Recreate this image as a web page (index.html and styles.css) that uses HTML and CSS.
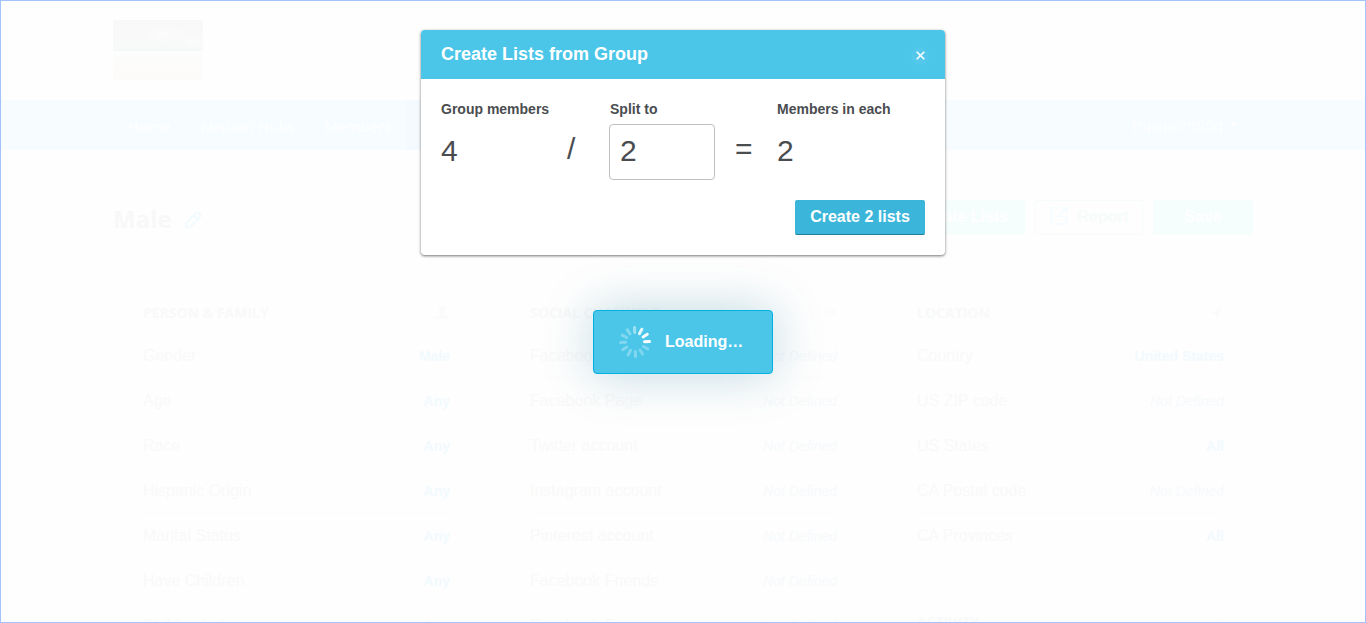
FILE: index.html
```html
<!DOCTYPE html>
<html lang="en">
<head>
<meta charset="utf-8">
<title>Create Lists from Group</title>
<link rel="stylesheet" href="styles.css">
</head>
<body>
<div class="page">
  <header class="brand"><div class="photo"></div></header>
  <nav class="nav">
    <div class="nav-links"><span>Home</span><span>Mission Hubs</span><span>Members</span><span class="active">Groups</span></div>
    <div class="user">tripsprint95q <i class="caret"></i></div>
  </nav>
  <main class="content">
    <div class="title-row">
      <h1>Male</h1>
      <svg class="pencil" width="18" height="18" viewBox="0 0 18 18"><path d="M2 16v-4L11.500 2.500a2.400 2.400 0 0 1 4 4L6 16zM10 4.500l3.500 3.500" fill="none" stroke="#f1fbfe" stroke-width="2" stroke-linejoin="round"/></svg>
      <div class="actions">
        <div class="btn create">Create Lists</div>
        <div class="btn report"><svg width="20" height="20" viewBox="0 0 20 20"><path d="M8 2H4.500A2.500 2.500 0 0 0 2 4.500v11A2.500 2.500 0 0 0 4.500 18h10a2.500 2.500 0 0 0 2.500-2.500V11M8.500 11.500L17 3M12 2h6v6" fill="none" stroke="#f6fcff" stroke-width="2"/></svg>Report</div>
        <div class="btn save">Save</div>
      </div>
    </div>
    <div class="columns">
      <section>
        <h2>PERSON &amp; FAMILY <svg width="14" height="14" viewBox="0 0 14 14"><path d="M7 0a3.500 4 0 0 1 2 7.200V9l5 2v2H0v-2l5-2V7.200A3.500 4 0 0 1 7 0z" fill="#fbfbfb"/></svg></h2>
        <div class="row line"><span>Gender</span><b>Male</b></div>
        <div class="row"><span>Age</span><b>Any</b></div>
        <div class="row"><span>Race</span><b>Any</b></div>
        <div class="row line"><span>Hispanic Origin</span><b>Any</b></div>
        <div class="row"><span>Marital Status</span><b>Any</b></div>
        <div class="row"><span>Have Children</span><b>Any</b></div>
        <div class="row"><span>Children's Age</span><b>Any</b></div>
      </section>
      <section>
        <h2>SOCIAL CHANNELS <svg width="14" height="14" viewBox="0 0 14 14"><path d="M2 3h11v7H6l-3 2v-2H2z" fill="#fcfcfc"/></svg></h2>
        <div class="row line"><span>Facebook ID</span><em>Not Defined</em></div>
        <div class="row"><span>Facebook Page</span><em>Not Defined</em></div>
        <div class="row"><span>Twitter account</span><em>Not Defined</em></div>
        <div class="row line"><span>Instagram account</span><em>Not Defined</em></div>
        <div class="row"><span>Pinterest account</span><em>Not Defined</em></div>
        <div class="row"><span>Facebook Friends</span><em>Not Defined</em></div>
        <div class="row"><span>Facebook Fans</span><em>Not Defined</em></div>
      </section>
      <section>
        <h2>LOCATION <svg width="14" height="14" viewBox="0 0 14 14"><path d="M13 1L8 13 7 8 1 7z" fill="#fbfbfb"/></svg></h2>
        <div class="row line"><span>Country</span><b>United States</b></div>
        <div class="row"><span>US ZIP code</span><em>Not Defined</em></div>
        <div class="row"><span>US States</span><b>All</b></div>
        <div class="row line"><span>CA Postal code</span><em>Not Defined</em></div>
        <div class="row"><span>CA Provinces</span><b>All</b></div>
        <h2 class="second">ACTIVITY <svg width="14" height="14" viewBox="0 0 14 14"><path d="M10 1l3 12H6z" fill="#fcfcfc"/></svg></h2>
      </section>
    </div>
  </main>
</div>

<div class="modal">
  <div class="modal-head"><span>Create Lists from Group</span>
    <div class="close"><svg width="9" height="9" viewBox="0 0 9 9"><path d="M.7.700l7.600 7.600M8.300.7L.7 8.300" stroke="#fff" stroke-width="1.600"/></svg></div>
  </div>
  <div class="modal-body">
    <div class="split">
      <div class="field members"><label>Group members</label><div class="num">4</div></div>
      <div class="op slash">/</div>
      <div class="field parts"><label>Split to</label><div class="input">2</div></div>
      <div class="op equals">=</div>
      <div class="field"><label>Members in each</label><div class="num">2</div></div>
    </div>
    <div class="submit">Create 2 lists</div>
  </div>
</div>

<div class="loading">
  <svg width="34" height="34" viewBox="-17 -17 34 34" stroke="#fff" stroke-width="3" stroke-linecap="round">
    <g transform="rotate(-2)">
      <path d="M0-9.500V-14.500" opacity=".46"/>
      <path d="M0-9.500V-14.500" opacity=".85" transform="rotate(30)"/>
      <path d="M0-9.500V-14.500" opacity=".95" transform="rotate(60)"/>
      <path d="M0-9.500V-14.500" transform="rotate(90)"/>
      <path d="M0-9.500V-14.500" opacity=".28" transform="rotate(120)"/>
      <path d="M0-9.500V-14.500" opacity=".28" transform="rotate(150)"/>
      <path d="M0-9.500V-14.500" opacity=".3" transform="rotate(180)"/>
      <path d="M0-9.500V-14.500" opacity=".3" transform="rotate(210)"/>
      <path d="M0-9.500V-14.500" opacity=".3" transform="rotate(240)"/>
      <path d="M0-9.500V-14.500" opacity=".3" transform="rotate(270)"/>
      <path d="M0-9.500V-14.500" opacity=".3" transform="rotate(300)"/>
      <path d="M0-9.500V-14.500" opacity=".32" transform="rotate(330)"/>
    </g>
  </svg>
  <span>Loading…</span>
</div>
<div class="frame"></div>
</body>
</html>
```
FILE: styles.css
```css
* { box-sizing: border-box; }
body {
  margin: 0;
  width: 1366px;
  height: 623px;
  position: relative;
  overflow: hidden;
  background: #fefefe;
  font-family: "Liberation Sans", Arial, sans-serif;
  color: #4a4d50;
}
.page { height: 623px; overflow: hidden; }
.frame {
  position: absolute;
  inset: 0;
  border: 1px solid #a2c4fa;
  pointer-events: none;
}
.brand { height: 100px; padding: 20px 113px; }
.photo {
  width: 90px;
  height: 60px;
  background:
    radial-gradient(ellipse 22px 9px at 52px 14px, rgba(254,254,254,.6), transparent),
    radial-gradient(ellipse 16px 6px at 80px 22px, rgba(254,254,254,.5), transparent),
    linear-gradient(#f8f8f8 0, #f9f9f9 30%, #f7f9f9 51%, #fefefe 54%, #fcfcfb 60%, #fdfbf9 100%);
}
.nav {
  height: 50px;
  padding: 0 113px;
  display: flex;
  justify-content: space-between;
  background: #f6fcff;
  color: #fff;
  font: 500 15px/53px "Open Sans", sans-serif;
}
.nav-links { display: flex; }
.nav-links span { padding: 0 15px; height: 50px; }
.nav-links .active { background: #f4fafd; }
.user { padding-right: 15px; display: flex; align-items: center; gap: 7px; }
.caret { border: 4px solid transparent; border-top-color: #fff; border-bottom: 0; }
.content { padding: 50px 113px 0; }
.title-row { display: flex; align-items: center; height: 35px; }
h1 { margin: 2px 0 0; font: bold 24px/34px "Open Sans", sans-serif; color: #f8f8f8; }
.pencil { margin-left: 12px; margin-top: 4px; }
.actions { margin-left: auto; display: flex; gap: 10px; }
.btn {
  height: 35px;
  border-radius: 2px;
  font: bold 16px/33px "Liberation Sans", sans-serif;
  text-align: center;
  color: #fff;
  background: #f6fdfd;
}
.create { width: 125px; }
.report {
  width: 108px;
  display: flex;
  justify-content: center;
  gap: 8px;
  border: 1px solid #f6fcfc;
  background: #fefefe;
  color: #f6fbfb;
  line-height: 32px;
}
.report svg { margin-top: 5px; }
.save { width: 100px; }
.columns { padding: 68px 30px 0; display: flex; gap: 81px; }
section { width: 306px; }
h2 {
  display: flex;
  justify-content: space-between;
  align-items: center;
  margin: 0 0 10px;
  height: 20px;
  font: bold 14px/20px "Open Sans", sans-serif;
  color: #f8f9f9;
}
.second { margin-top: 54px; }
.row {
  display: flex;
  justify-content: space-between;
  align-items: center;
  height: 45px;
  font-size: 16px;
  color: #f9f9f9;
}
.line { box-shadow: inset 0 -1px #fcfcfc; }
.row b, .row em { font-size: 14px; margin-right: -1px; padding-top: 1px; }
.row b { color: #f2fafe; }
.row em { color: #f7fafc; }

.modal {
  position: absolute;
  left: 421px;
  top: 30px;
  width: 524px;
  height: 225px;
  background: #fff;
  border-radius: 4px;
  box-shadow: 0 1px 3px rgba(0,0,0,.55);
}
.modal-head {
  height: 49px;
  padding: 0 16px 0 20px;
  display: flex;
  align-items: center;
  justify-content: space-between;
  background: #4bc6e9;
  border-radius: 4px 4px 0 0;
  color: #fff;
  font: bold 18px/46px "Liberation Sans", sans-serif;
}
.modal-head span { margin-bottom: 2px; }
.close {
  width: 18px;
  height: 18px;
  margin-top: 2px;
  display: flex;
  align-items: center;
  justify-content: center;
  border-radius: 50%;
  background: #53c8ea;
}
.modal-body { padding: 20px; display: flex; flex-direction: column; align-items: flex-end; gap: 20px; }
.split { display: flex; width: 100%; height: 81px; }
.field label { display: block; font: bold 14px/20px "Liberation Sans", sans-serif; white-space: nowrap; }
.field.members { width: 126px; }
.num, .input { font-size: 30px; line-height: 54px; }
.num { padding-top: 5px; }
.input {
  width: 106px;
  height: 56px;
  margin-top: 5px;
  padding-left: 10px;
  border: 1px solid #bfbfbf;
  border-radius: 4px;
  line-height: 52px;
}
.field.parts { width: 126px; }
.parts label { padding-left: 1px; }
.op { padding-top: 23px; font-size: 30px; line-height: 54px; }
.slash { width: 42px; }
.equals { width: 42px; }
.submit {
  width: 130px;
  height: 35px;
  border-radius: 2px;
  background: #3bb6da;
  border-bottom: 1px solid #1f7f9b;
  color: #fff;
  font: bold 16px/33px "Liberation Sans", sans-serif;
  text-align: center;
}
.loading {
  position: absolute;
  left: 593px;
  top: 310px;
  width: 180px;
  height: 64px;
  padding-left: 24px;
  display: flex;
  align-items: center;
  gap: 13px;
  background: #4bc6e9;
  border: 1px solid #00b0e0;
  border-radius: 4px;
  box-shadow: 0 0 50px rgba(0,110,140,.26);
  color: #fff;
  font: bold 16px "Liberation Sans", sans-serif;
}
```
